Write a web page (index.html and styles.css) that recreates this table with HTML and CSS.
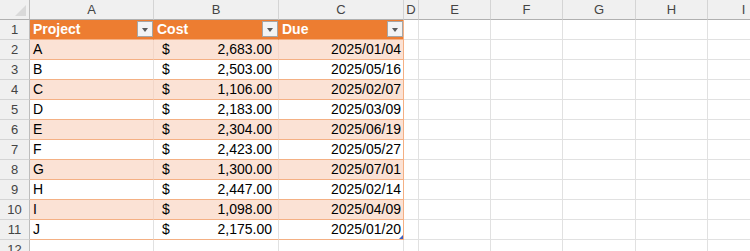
FILE: index.html
```html
<!DOCTYPE html>
<html>
<head>
<meta charset="utf-8">
<link rel="stylesheet" href="styles.css">
</head>
<body>
<div class="sheet">
  <div class="corner"><svg width="30" height="20" viewBox="0 0 30 20"><polygon points="26,5 26,16 15,16" fill="#d9d9d9"/></svg></div>
  <div class="ch">A</div><div class="ch">B</div><div class="ch">C</div><div class="ch">D</div><div class="ch">E</div><div class="ch">F</div><div class="ch">G</div><div class="ch">H</div><div class="ch">I</div>

  <div class="rh">1</div>
  <div class="c th">Project<span class="flt"></span></div>
  <div class="c th">Cost<span class="flt"></span></div>
  <div class="c th last">Due<span class="flt"></span></div>
  <div class="c"></div><div class="c"></div><div class="c"></div><div class="c"></div><div class="c"></div><div class="c"></div>

  <div class="rh">2</div>
  <div class="c tb band">A</div><div class="c tb band acc"><span>$</span><span>2,683.00</span></div><div class="c tb band last num">2025/01/04</div>
  <div class="c"></div><div class="c"></div><div class="c"></div><div class="c"></div><div class="c"></div><div class="c"></div>

  <div class="rh">3</div>
  <div class="c tb">B</div><div class="c tb acc"><span>$</span><span>2,503.00</span></div><div class="c tb last num">2025/05/16</div>
  <div class="c"></div><div class="c"></div><div class="c"></div><div class="c"></div><div class="c"></div><div class="c"></div>

  <div class="rh">4</div>
  <div class="c tb band">C</div><div class="c tb band acc"><span>$</span><span>1,106.00</span></div><div class="c tb band last num">2025/02/07</div>
  <div class="c"></div><div class="c"></div><div class="c"></div><div class="c"></div><div class="c"></div><div class="c"></div>

  <div class="rh">5</div>
  <div class="c tb">D</div><div class="c tb acc"><span>$</span><span>2,183.00</span></div><div class="c tb last num">2025/03/09</div>
  <div class="c"></div><div class="c"></div><div class="c"></div><div class="c"></div><div class="c"></div><div class="c"></div>

  <div class="rh">6</div>
  <div class="c tb band">E</div><div class="c tb band acc"><span>$</span><span>2,304.00</span></div><div class="c tb band last num">2025/06/19</div>
  <div class="c"></div><div class="c"></div><div class="c"></div><div class="c"></div><div class="c"></div><div class="c"></div>

  <div class="rh">7</div>
  <div class="c tb">F</div><div class="c tb acc"><span>$</span><span>2,423.00</span></div><div class="c tb last num">2025/05/27</div>
  <div class="c"></div><div class="c"></div><div class="c"></div><div class="c"></div><div class="c"></div><div class="c"></div>

  <div class="rh">8</div>
  <div class="c tb band">G</div><div class="c tb band acc"><span>$</span><span>1,300.00</span></div><div class="c tb band last num">2025/07/01</div>
  <div class="c"></div><div class="c"></div><div class="c"></div><div class="c"></div><div class="c"></div><div class="c"></div>

  <div class="rh">9</div>
  <div class="c tb">H</div><div class="c tb acc"><span>$</span><span>2,447.00</span></div><div class="c tb last num">2025/02/14</div>
  <div class="c"></div><div class="c"></div><div class="c"></div><div class="c"></div><div class="c"></div><div class="c"></div>

  <div class="rh">10</div>
  <div class="c tb band">I</div><div class="c tb band acc"><span>$</span><span>1,098.00</span></div><div class="c tb band last num">2025/04/09</div>
  <div class="c"></div><div class="c"></div><div class="c"></div><div class="c"></div><div class="c"></div><div class="c"></div>

  <div class="rh">11</div>
  <div class="c tb">J</div><div class="c tb acc"><span>$</span><span>2,175.00</span></div><div class="c tb last num end">2025/01/20<span class="handle"></span></div>
  <div class="c"></div><div class="c"></div><div class="c"></div><div class="c"></div><div class="c"></div><div class="c"></div>

  <div class="rh">12</div>
  <div class="c"></div><div class="c"></div><div class="c"></div><div class="c"></div><div class="c"></div><div class="c"></div><div class="c"></div><div class="c"></div><div class="c"></div>
</div>
</body>
</html>
```
FILE: styles.css
```css
html, body {
  margin: 0;
  padding: 0;
  background: #ffffff;
  overflow: hidden;
}
body {
  width: 750px;
  height: 251px;
  font-family: "Liberation Sans", Arial, sans-serif;
}
.sheet {
  display: grid;
  grid-template-columns: 30px 124px 125px 125px 15px 72px 72px 73px 72px 72px;
  grid-auto-rows: 20px;
  width: 780px;
}
.sheet > div {
  box-sizing: border-box;
  border-right: 1px solid #e1e1e1;
  border-bottom: 1px solid #e1e1e1;
  font-size: 14px;
  line-height: 19px;
  white-space: nowrap;
  overflow: hidden;
}
.corner {
  background: #f0f0f0;
  border-right: 1px solid #bdbdbd !important;
  border-bottom: 1px solid #b0b0b0 !important;
}
.corner svg {
  display: block;
}
.ch {
  background: #f0f0f0;
  color: #444444;
  text-align: center;
  font-size: 13px !important;
  border-right: 1px solid #d4d4d4 !important;
  border-bottom: 1px solid #b0b0b0 !important;
}
.rh {
  background: #f0f0f0;
  color: #444444;
  text-align: center;
  font-size: 13px !important;
  border-right: 1px solid #bdbdbd !important;
  border-bottom: 1px solid #d4d4d4 !important;
}
.c {
  padding: 0 3px;
  color: #000000;
}
.th {
  position: relative;
  background: #ed7d31;
  color: #ffffff;
  font-weight: bold;
  border-right-color: #ed7d31 !important;
  border-bottom-color: #f4b084 !important;
}
.flt {
  position: absolute;
  right: 0;
  top: 1px;
  width: 16px;
  height: 16px;
  box-sizing: border-box;
  background: #f3f3f3;
  border: 1px solid #a6a6a6;
}
.flt::after {
  content: "";
  position: absolute;
  left: 4px;
  top: 6px;
  border-left: 3.5px solid transparent;
  border-right: 3.5px solid transparent;
  border-top: 4px solid #5a5a5a;
}
.tb {
  border-bottom-color: #f4b084 !important;
}
.band {
  background: #fbe2d5;
  border-right-color: #f2d6c8 !important;
}
.last {
  border-right-color: #f4b084 !important;
}
.num {
  text-align: right;
  padding-right: 2px;
}
.acc {
  display: flex;
  justify-content: space-between;
  padding-left: 8px;
  padding-right: 6px;
}
.end {
  position: relative;
}
.handle {
  position: absolute;
  right: 0;
  bottom: 0;
  width: 0;
  height: 0;
  border-left: 4px solid transparent;
  border-bottom: 4px solid #3f5fbf;
}
```
